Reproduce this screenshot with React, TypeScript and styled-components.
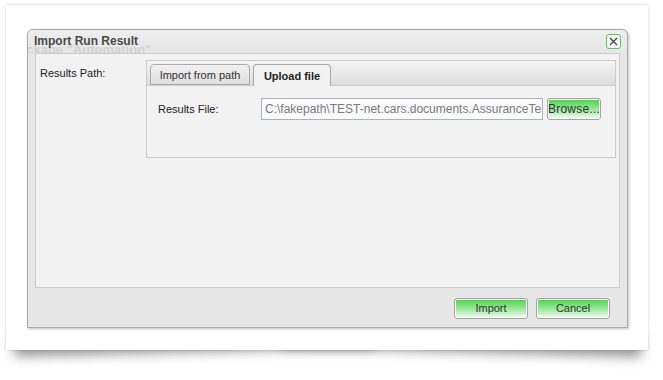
import React from 'react'
import styled, { createGlobalStyle } from 'styled-components'

const GlobalStyle = createGlobalStyle`
  html, body {
    margin: 0;
    padding: 0;
    background: #ffffff;
    font-family: "Liberation Sans", Arial, sans-serif;
  }
`

const Page = styled.div`
  width: 663px;
  height: 380px;
  padding: 5px 0 0 6px;
  box-sizing: border-box;
  overflow: hidden;
  position: relative;
  z-index: 0;
`

const Card = styled.div`
  position: relative;
  width: 642px;
  height: 345px;
  box-sizing: border-box;
  padding: 24px 20px 0 21px;
  background: #ffffff;
  box-shadow: 0 0 3px rgba(0, 0, 0, 0.18);

  &::before,
  &::after {
    content: '';
    position: absolute;
    z-index: -1;
    bottom: 16px;
    width: 56%;
    height: 24px;
    background: #999;
    box-shadow: 0 18px 12px rgba(0, 0, 0, 0.4);
  }
  &::before {
    left: 8px;
    transform: rotate(-1.5deg);
  }
  &::after {
    right: 6px;
    transform: rotate(1.7deg);
  }
`

const Dialog = styled.div`
  width: 601px;
  height: 299px;
  box-sizing: border-box;
  display: flex;
  flex-direction: column;
  background: #e6e6e6;
  border: 1px solid #a9a9a9;
  border-radius: 6px 6px 0 0;
  box-shadow: 1px 1px 3px rgba(0, 0, 0, 0.25);
`

const TitleBar = styled.div`
  position: relative;
  height: 23px;
  flex: none;
  display: flex;
  align-items: center;
  justify-content: space-between;
  padding: 0 6px 0 6px;
  overflow: hidden;
  background: linear-gradient(#eeeeee, #e6e6e6);
  border-radius: 6px 6px 0 0;
`

const GhostText = styled.span`
  position: absolute;
  left: -9px;
  top: 12px;
  font-size: 13px;
  font-weight: bold;
  color: #d2d2d2;
  white-space: nowrap;
`

const Title = styled.span`
  position: relative;
  font-size: 12px;
  font-weight: bold;
  color: #4a4a4a;
  margin-top: -2px;
`

const CloseButton = styled.button`
  position: relative;
  width: 15px;
  height: 15px;
  padding: 0;
  display: flex;
  align-items: center;
  justify-content: center;
  background: #f8f8f8;
  border: 1px solid #5cc85c;
  border-radius: 3px;
`

const Body = styled.div`
  flex: 1;
  margin: 0 7px;
  display: flex;
  background: #f2f2f2;
  border: 1px solid #cdcdcd;
`

const LabelColumn = styled.div`
  width: 110px;
  flex: none;
  padding: 9px 0 0 4px;
  box-sizing: border-box;
`

const Label = styled.span`
  font-size: 11px;
  color: #222222;
`

const TabsPanel = styled.div`
  width: 470px;
  height: 98px;
  margin-top: 6px;
  display: flex;
  flex-direction: column;
  border: 1px solid #cccccc;
  box-sizing: border-box;
`

const TabStrip = styled.div`
  height: 24px;
  flex: none;
  display: flex;
  align-items: flex-end;
  gap: 3px;
  padding: 0 0 0 3px;
  background: linear-gradient(#f4f4f4, #dddddd);
  border-bottom: 1px solid #cccccc;
`

const Tab = styled.div<{ $active?: boolean; $width: number }>`
  width: ${p => p.$width}px;
  height: ${p => (p.$active ? '22px' : '21px')};
  box-sizing: border-box;
  display: flex;
  align-items: center;
  justify-content: center;
  margin-bottom: ${p => (p.$active ? '-1px' : '0')};
  font-size: 11px;
  font-weight: ${p => (p.$active ? 'bold' : 'normal')};
  color: ${p => (p.$active ? '#222222' : '#333333')};
  background: ${p => (p.$active ? '#f2f2f2' : 'linear-gradient(#f0f0f0, #e0e0e0)')};
  border: 1px solid #aaaaaa;
  border-bottom: ${p => (p.$active ? 'none' : '1px solid #aaaaaa')};
  border-radius: 4px 4px 0 0;
`

const TabContent = styled.div`
  flex: 1;
  display: flex;
  align-items: flex-start;
  padding: 12px 0 0 11px;
  background: #f2f2f2;
`

const FieldLabel = styled.span`
  width: 103px;
  flex: none;
  line-height: 22px;
  font-size: 11px;
  color: #222222;
`

const FileInput = styled.input`
  width: 282px;
  height: 22px;
  box-sizing: border-box;
  margin: 0;
  padding: 0 0 0 3px;
  font-family: "Liberation Sans", Arial, sans-serif;
  font-size: 12px;
  color: #7a7a7a;
  background: #fafafa;
  border: 1px solid #a9b2c3;
  outline: none;
`

const GreenButton = styled.button<{ $width: number; $height: number }>`
  width: ${p => p.$width}px;
  height: ${p => p.$height}px;
  padding: 0;
  font-family: "Liberation Sans", Arial, sans-serif;
  font-size: 11px;
  color: #333333;
  background: linear-gradient(#48d348, #8fe38f 45%, #f4fbf4);
  border: 1px solid #a5a5a5;
  border-radius: 3px;
  box-shadow: inset 0 0 0 1px #ffffff;
`

const BrowseButton = styled(GreenButton)`
  margin-left: 4px;
  font-size: 12px;
  letter-spacing: 0.2px;
`

const Footer = styled.div`
  height: 38px;
  flex: none;
  display: flex;
  align-items: center;
  justify-content: flex-end;
  gap: 8px;
  padding: 1px 17px 0 0;
`

export default function App() {
  return (
    <>
      <GlobalStyle />
      <Page>
        <Card>
          <Dialog>
            <TitleBar>
              <GhostText>ackage "Automation"</GhostText>
              <Title>Import Run Result</Title>
              <CloseButton aria-label="Close">
                <svg width="9" height="9" viewBox="0 0 9 9">
                  <path d="M1 1 L8 8 M8 1 L1 8" stroke="#444" strokeWidth="1.3" />
                </svg>
              </CloseButton>
            </TitleBar>
            <Body>
              <LabelColumn>
                <Label>Results Path:</Label>
              </LabelColumn>
              <TabsPanel>
                <TabStrip>
                  <Tab $width={100}>Import from path</Tab>
                  <Tab $width={78} $active>Upload file</Tab>
                </TabStrip>
                <TabContent>
                  <FieldLabel>Results File:</FieldLabel>
                  <FileInput readOnly value="C:\fakepath\TEST-net.cars.documents.AssuranceTests.xml" />
                  <BrowseButton $width={54} $height={22}>Browse...</BrowseButton>
                </TabContent>
              </TabsPanel>
            </Body>
            <Footer>
              <GreenButton $width={74} $height={21}>Import</GreenButton>
              <GreenButton $width={74} $height={21}>Cancel</GreenButton>
            </Footer>
          </Dialog>
        </Card>
      </Page>
    </>
  )
}
